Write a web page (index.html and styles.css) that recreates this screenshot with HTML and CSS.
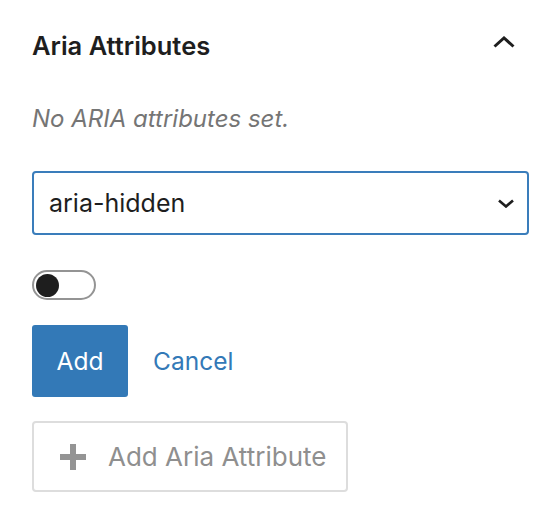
FILE: index.html
```html
<!DOCTYPE html>
<html>
<head>
<meta charset="utf-8">
<link rel="stylesheet" href="styles.css">
</head>
<body>
<div class="panel">
  <div class="panel-header">
    <h2 class="panel-title">Aria Attributes</h2>
    <svg class="chev-up" width="22" height="12" viewBox="0 0 22 12"><path d="M1.5 10.5 L11 2 L20.5 10.5" fill="none" stroke="#1e1e1e" stroke-width="3"/></svg>
  </div>
  <p class="empty">No ARIA attributes set.</p>
  <div class="select">
    <span class="select-value">aria-hidden</span>
    <svg class="chev-down" width="16" height="9" viewBox="0 0 16 9"><path d="M1 1.5 L8 7.5 L15 1.5" fill="none" stroke="#1e1e1e" stroke-width="2.6"/></svg>
  </div>
  <div class="toggle"><span class="knob"></span></div>
  <div class="actions">
    <button class="btn-primary">Add</button>
    <button class="btn-link">Cancel</button>
  </div>
  <button class="btn-add">
    <svg class="plus" width="26" height="26" viewBox="0 0 26 26"><rect x="10" y="0" width="6" height="26" fill="#949494"/><rect x="0" y="10" width="26" height="6" fill="#949494"/></svg>
    <span>Add Aria Attribute</span>
  </button>
</div>
</body>
</html>
```
FILE: styles.css
```css
html, body {
  margin: 0;
  background: #fff;
}
body {
  font-family: Inter, "Noto Sans", sans-serif;
  color: #1e1e1e;
}
.panel {
  width: 497px;
  padding: 28px 31px 0 32px;
  display: flex;
  flex-direction: column;
}
.panel-header {
  display: flex;
  align-items: center;
  justify-content: space-between;
  height: 36px;
}
.panel-title {
  margin: 0;
  font-size: 25.5px;
  font-weight: 600;
  line-height: 36px;
}
.chev-up {
  margin-right: 14px;
  margin-bottom: 8px;
}
.empty {
  margin: 40px 0 0 0;
  font-style: italic;
  font-size: 24px;
  line-height: 30px;
  color: #757575;
}
.select {
  margin-top: 37px;
  height: 60px;
  border: 2.5px solid #3a7dbb;
  border-radius: 4px;
  display: flex;
  align-items: center;
  justify-content: space-between;
  padding: 0 13px 0 15px;
}
.select-value {
  font-size: 25px;
}
.toggle {
  margin-top: 35px;
  width: 58px;
  height: 26px;
  border: 2px solid #949494;
  border-radius: 15px;
  display: flex;
  align-items: center;
  padding-left: 2px;
}
.knob {
  width: 23px;
  height: 23px;
  border-radius: 50%;
  background: #1e1e1e;
}
.actions {
  margin-top: 25px;
  display: flex;
  align-items: center;
  gap: 25px;
}
.btn-primary {
  width: 96px;
  height: 72px;
  border: none;
  border-radius: 3px;
  background: #3379b7;
  color: #fff;
  font-family: inherit;
  font-size: 24.5px;
  padding: 0;
}
.btn-link {
  border: none;
  background: none;
  padding: 0;
  color: #3379b7;
  font-family: inherit;
  font-size: 24.5px;
}
.btn-add {
  margin-top: 24px;
  width: 316px;
  height: 71px;
  border: 2px solid #dddddd;
  border-radius: 4px;
  background: #fff;
  display: flex;
  align-items: center;
  padding: 0 0 0 26px;
  gap: 22px;
  font-family: inherit;
  font-size: 26px;
  color: #8f8f8f;
}
```
